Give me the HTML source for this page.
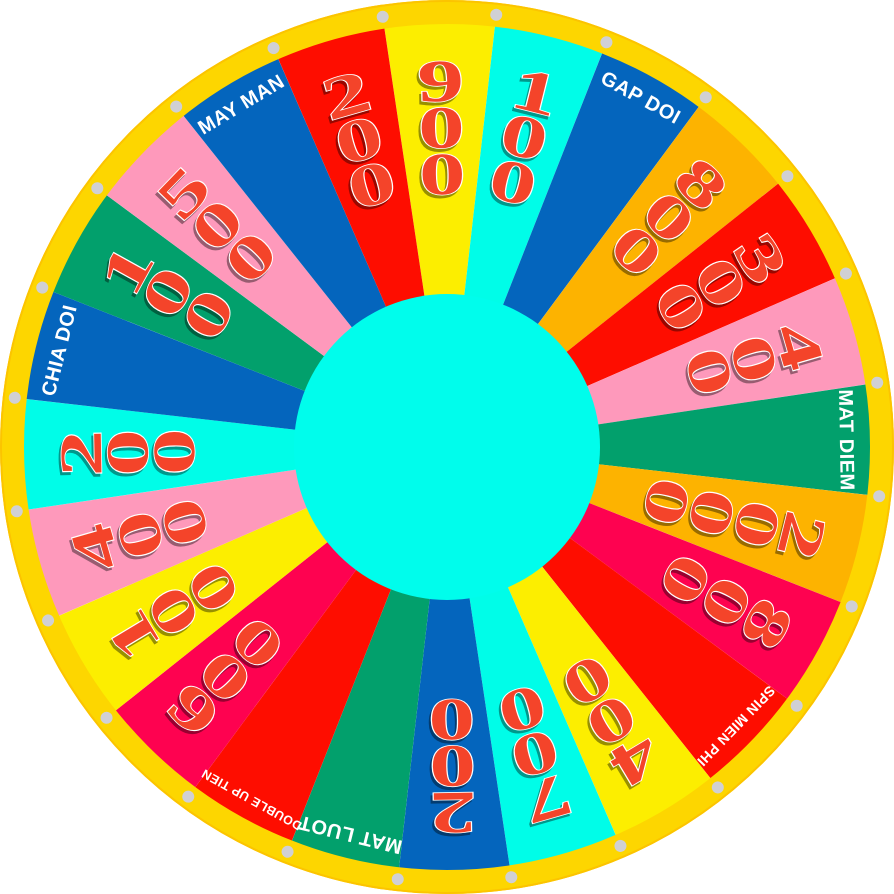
<!DOCTYPE html>
<html><head><meta charset="utf-8"><style>
html,body{margin:0;padding:0;background:#fff;width:894px;height:894px;overflow:hidden}
svg{display:block}
.d{font-family:"Liberation Serif",serif;font-weight:bold;font-size:60px;fill:#f4442a;stroke:#fff;stroke-width:1.6;paint-order:stroke;text-anchor:middle}
.n{filter:drop-shadow(-2px 3px 0 rgba(0,0,0,.4))}
.l{font-family:"Liberation Sans",sans-serif;font-weight:bold;fill:#fff;text-anchor:middle;letter-spacing:0.5px}
</style></head><body>
<svg width="894" height="894" viewBox="0 0 894 894">
<defs><path id="w" d="M447 447 L390.9 20.7 A430 430 0 0 1 503.1 20.7 Z"/></defs>
<g>
<use href="#w" fill="#fcee00" transform="rotate(-1 447 447)"/>
<use href="#w" fill="#00fde8" transform="rotate(14 447 447)"/>
<use href="#w" fill="#0465bd" transform="rotate(29 447 447)"/>
<use href="#w" fill="#fdb300" transform="rotate(44 447 447)"/>
<use href="#w" fill="#fe0d00" transform="rotate(59 447 447)"/>
<use href="#w" fill="#fe99bb" transform="rotate(74 447 447)"/>
<use href="#w" fill="#02a06c" transform="rotate(89 447 447)"/>
<use href="#w" fill="#fdb300" transform="rotate(104 447 447)"/>
<use href="#w" fill="#fe0250" transform="rotate(119 447 447)"/>
<use href="#w" fill="#fe0d00" transform="rotate(134 447 447)"/>
<use href="#w" fill="#fcee00" transform="rotate(149 447 447)"/>
<use href="#w" fill="#00fde8" transform="rotate(164 447 447)"/>
<use href="#w" fill="#0465bd" transform="rotate(179 447 447)"/>
<use href="#w" fill="#02a06c" transform="rotate(194 447 447)"/>
<use href="#w" fill="#fe0d00" transform="rotate(209 447 447)"/>
<use href="#w" fill="#fe0250" transform="rotate(224 447 447)"/>
<use href="#w" fill="#fcee00" transform="rotate(239 447 447)"/>
<use href="#w" fill="#fe99bb" transform="rotate(254 447 447)"/>
<use href="#w" fill="#00fde8" transform="rotate(269 447 447)"/>
<use href="#w" fill="#0465bd" transform="rotate(284 447 447)"/>
<use href="#w" fill="#02a06c" transform="rotate(299 447 447)"/>
<use href="#w" fill="#fe99bb" transform="rotate(314 447 447)"/>
<use href="#w" fill="#0465bd" transform="rotate(329 447 447)"/>
<use href="#w" fill="#fe0d00" transform="rotate(344 447 447)"/>
</g>
<circle cx="447" cy="447" r="435" fill="none" stroke="#fdd600" stroke-width="24"/>
<circle cx="447" cy="447" r="446" fill="none" stroke="#fcc400" stroke-width="2"/>
<g fill="#d0d0d4">
<circle cx="447" cy="12" r="6" transform="rotate(-8.5 447 447)"/>
<circle cx="447" cy="12" r="6" transform="rotate(6.5 447 447)"/>
<circle cx="447" cy="12" r="6" transform="rotate(21.5 447 447)"/>
<circle cx="447" cy="12" r="6" transform="rotate(36.5 447 447)"/>
<circle cx="447" cy="12" r="6" transform="rotate(51.5 447 447)"/>
<circle cx="447" cy="12" r="6" transform="rotate(66.5 447 447)"/>
<circle cx="447" cy="12" r="6" transform="rotate(81.5 447 447)"/>
<circle cx="447" cy="12" r="6" transform="rotate(96.5 447 447)"/>
<circle cx="447" cy="12" r="6" transform="rotate(111.5 447 447)"/>
<circle cx="447" cy="12" r="6" transform="rotate(126.5 447 447)"/>
<circle cx="447" cy="12" r="6" transform="rotate(141.5 447 447)"/>
<circle cx="447" cy="12" r="6" transform="rotate(156.5 447 447)"/>
<circle cx="447" cy="12" r="6" transform="rotate(171.5 447 447)"/>
<circle cx="447" cy="12" r="6" transform="rotate(186.5 447 447)"/>
<circle cx="447" cy="12" r="6" transform="rotate(201.5 447 447)"/>
<circle cx="447" cy="12" r="6" transform="rotate(216.5 447 447)"/>
<circle cx="447" cy="12" r="6" transform="rotate(231.5 447 447)"/>
<circle cx="447" cy="12" r="6" transform="rotate(246.5 447 447)"/>
<circle cx="447" cy="12" r="6" transform="rotate(261.5 447 447)"/>
<circle cx="447" cy="12" r="6" transform="rotate(276.5 447 447)"/>
<circle cx="447" cy="12" r="6" transform="rotate(291.5 447 447)"/>
<circle cx="447" cy="12" r="6" transform="rotate(306.5 447 447)"/>
<circle cx="447" cy="12" r="6" transform="rotate(321.5 447 447)"/>
<circle cx="447" cy="12" r="6" transform="rotate(336.5 447 447)"/>
</g>

<g class="n"><g transform="rotate(-1 447 447)"><text class="d" transform="translate(447,101) scale(1.55,1)">9</text><text class="d" transform="translate(447,147.5) scale(1.55,1)">0</text><text class="d" transform="translate(447,194) scale(1.55,1)">0</text></g></g>
<g class="n"><g transform="rotate(14 447 447)"><text class="d" transform="translate(447,101) scale(1.55,1)">1</text><text class="d" transform="translate(447,147.5) scale(1.55,1)">0</text><text class="d" transform="translate(447,194) scale(1.55,1)">0</text></g></g>
<g class="n"><g transform="rotate(44 447 447)"><text class="d" transform="translate(447,101) scale(1.55,1)">8</text><text class="d" transform="translate(447,147.5) scale(1.55,1)">0</text><text class="d" transform="translate(447,194) scale(1.55,1)">0</text></g></g>
<g class="n"><g transform="rotate(59 447 447)"><text class="d" transform="translate(447,101) scale(1.55,1)">3</text><text class="d" transform="translate(447,147.5) scale(1.55,1)">0</text><text class="d" transform="translate(447,194) scale(1.55,1)">0</text></g></g>
<g class="n"><g transform="rotate(74 447 447)"><text class="d" transform="translate(447,101) scale(1.55,1)">4</text><text class="d" transform="translate(447,147.5) scale(1.55,1)">0</text><text class="d" transform="translate(447,194) scale(1.55,1)">0</text></g></g>
<g class="n"><g transform="rotate(104 447 447)"><text class="d" transform="translate(447,101) scale(1.55,1)">2</text><text class="d" transform="translate(447,147.5) scale(1.55,1)">0</text><text class="d" transform="translate(447,194) scale(1.55,1)">0</text><text class="d" transform="translate(447,240.5) scale(1.55,1)">0</text></g></g>
<g class="n"><g transform="rotate(119 447 447)"><text class="d" transform="translate(447,101) scale(1.55,1)">8</text><text class="d" transform="translate(447,147.5) scale(1.55,1)">0</text><text class="d" transform="translate(447,194) scale(1.55,1)">0</text></g></g>
<g class="n"><g transform="rotate(149 447 447)"><text class="d" transform="translate(447,101) scale(1.55,1)">4</text><text class="d" transform="translate(447,147.5) scale(1.55,1)">0</text><text class="d" transform="translate(447,194) scale(1.55,1)">0</text></g></g>
<g class="n"><g transform="rotate(164 447 447)"><text class="d" transform="translate(447,101) scale(1.55,1)">7</text><text class="d" transform="translate(447,147.5) scale(1.55,1)">0</text><text class="d" transform="translate(447,194) scale(1.55,1)">0</text></g></g>
<g class="n"><g transform="rotate(179 447 447)"><text class="d" transform="translate(447,101) scale(1.55,1)">2</text><text class="d" transform="translate(447,147.5) scale(1.55,1)">0</text><text class="d" transform="translate(447,194) scale(1.55,1)">0</text></g></g>
<g class="n"><g transform="rotate(224 447 447)"><text class="d" transform="translate(447,101) scale(1.55,1)">6</text><text class="d" transform="translate(447,147.5) scale(1.55,1)">0</text><text class="d" transform="translate(447,194) scale(1.55,1)">0</text></g></g>
<g class="n"><g transform="rotate(239 447 447)"><text class="d" transform="translate(447,101) scale(1.55,1)">1</text><text class="d" transform="translate(447,147.5) scale(1.55,1)">0</text><text class="d" transform="translate(447,194) scale(1.55,1)">0</text></g></g>
<g class="n"><g transform="rotate(254 447 447)"><text class="d" transform="translate(447,101) scale(1.55,1)">4</text><text class="d" transform="translate(447,147.5) scale(1.55,1)">0</text><text class="d" transform="translate(447,194) scale(1.55,1)">0</text></g></g>
<g class="n"><g transform="rotate(269 447 447)"><text class="d" transform="translate(447,101) scale(1.55,1)">2</text><text class="d" transform="translate(447,147.5) scale(1.55,1)">0</text><text class="d" transform="translate(447,194) scale(1.55,1)">0</text></g></g>
<g class="n"><g transform="rotate(299 447 447)"><text class="d" transform="translate(447,101) scale(1.55,1)">1</text><text class="d" transform="translate(447,147.5) scale(1.55,1)">0</text><text class="d" transform="translate(447,194) scale(1.55,1)">0</text></g></g>
<g class="n"><g transform="rotate(314 447 447)"><text class="d" transform="translate(447,101) scale(1.55,1)">5</text><text class="d" transform="translate(447,147.5) scale(1.55,1)">0</text><text class="d" transform="translate(447,194) scale(1.55,1)">0</text></g></g>
<g class="n"><g transform="rotate(344 447 447)"><text class="d" transform="translate(447,101) scale(1.55,1)">2</text><text class="d" transform="translate(447,147.5) scale(1.55,1)">0</text><text class="d" transform="translate(447,194) scale(1.55,1)">0</text></g></g>

<text class="l" font-size="20" x="447" y="54" transform="rotate(29 447 447)">GAP DOI</text>
<text class="l" font-size="20" x="447" y="54" transform="rotate(89 447 447)">MAT DIEM</text>
<text class="l" font-size="14" x="447" y="50" transform="rotate(134 447 447)">SPIN MIEN PHI</text>
<text class="l" font-size="20" x="447" y="54" transform="rotate(194 447 447)">MAT LUOT</text>
<text class="l" font-size="12.5" x="447" y="48" transform="rotate(209 447 447)">DOUBLE UP TIEN</text>
<text class="l" font-size="20" x="447" y="54" transform="rotate(284 447 447)">CHIA DOI</text>
<text class="l" font-size="20" x="447" y="54" transform="rotate(329 447 447)">MAY MAN</text>

<circle cx="447" cy="447" r="153" fill="#00fdec"/>
</svg>
</body></html>
